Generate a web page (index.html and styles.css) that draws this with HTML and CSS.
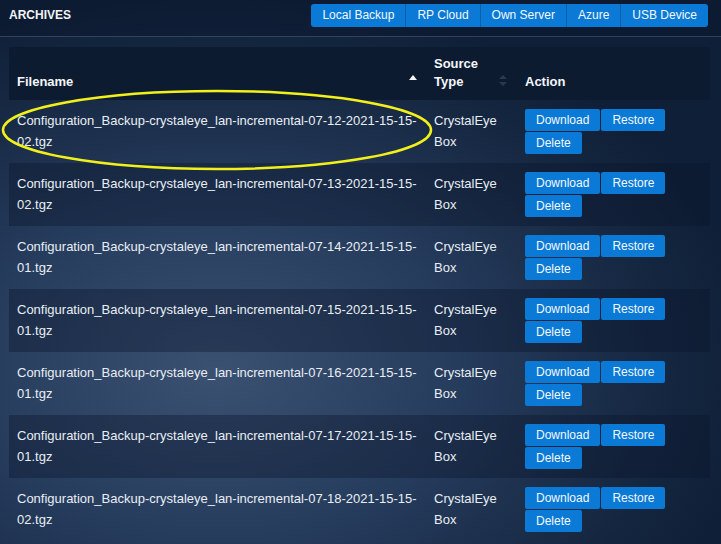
FILE: index.html
```html
<!DOCTYPE html>
<html lang="en">
<head>
  <meta charset="UTF-8" />
  <title>Archives</title>
  <link rel="stylesheet" href="styles.css">
</head>
<body>

  <div id="page">
    <div id="topbar">
      <span class="title">ARCHIVES</span>
      <div class="tabs">
        <button>Local Backup</button>
        <button>RP Cloud</button>
        <button>Own Server</button>
        <button>Azure</button>
        <button>USB Device</button>
      </div>
    </div>

    <table id="archives">
      <colgroup>
        <col class="c-file">
        <col class="c-source">
        <col class="c-action">
      </colgroup>
      <thead>
        <tr>
          <th class="sortable">Filename<span class="sort up"></span></th>
          <th class="sortable">Source Type<span class="sort both"></span></th>
          <th>Action</th>
        </tr>
      </thead>
      <tbody>
        <tr>
          <td>Configuration_Backup-crystaleye_lan-incremental-07-12-2021-15-15-02.tgz</td>
          <td>CrystalEye Box</td>
          <td class="actions"><button>Download</button><button>Restore</button><button>Delete</button></td>
        </tr>
        <tr>
          <td>Configuration_Backup-crystaleye_lan-incremental-07-13-2021-15-15-02.tgz</td>
          <td>CrystalEye Box</td>
          <td class="actions"><button>Download</button><button>Restore</button><button>Delete</button></td>
        </tr>
        <tr>
          <td>Configuration_Backup-crystaleye_lan-incremental-07-14-2021-15-15-01.tgz</td>
          <td>CrystalEye Box</td>
          <td class="actions"><button>Download</button><button>Restore</button><button>Delete</button></td>
        </tr>
        <tr>
          <td>Configuration_Backup-crystaleye_lan-incremental-07-15-2021-15-15-01.tgz</td>
          <td>CrystalEye Box</td>
          <td class="actions"><button>Download</button><button>Restore</button><button>Delete</button></td>
        </tr>
        <tr>
          <td>Configuration_Backup-crystaleye_lan-incremental-07-16-2021-15-15-01.tgz</td>
          <td>CrystalEye Box</td>
          <td class="actions"><button>Download</button><button>Restore</button><button>Delete</button></td>
        </tr>
        <tr>
          <td>Configuration_Backup-crystaleye_lan-incremental-07-17-2021-15-15-01.tgz</td>
          <td>CrystalEye Box</td>
          <td class="actions"><button>Download</button><button>Restore</button><button>Delete</button></td>
        </tr>
        <tr>
          <td>Configuration_Backup-crystaleye_lan-incremental-07-18-2021-15-15-02.tgz</td>
          <td>CrystalEye Box</td>
          <td class="actions"><button>Download</button><button>Restore</button><button>Delete</button></td>
        </tr>
      </tbody>
    </table>

    <!-- marca amarilla sobre la primera fila -->
    <svg class="highlight" width="440" height="86" viewBox="0 0 440 86">
      <ellipse cx="217" cy="41" rx="214" ry="39" fill="none" stroke="#f2f01a" stroke-width="2.5"/>
    </svg>
  </div>

</body>
</html>
```

FILE: styles.css
```css
html, body {
  margin: 0;
  padding: 0;
  height: 100%;
  overflow: hidden;
}
body {
  font-family: "Liberation Sans", Arial, sans-serif;
  color: #e9eef4;
  background: radial-gradient(ellipse 75% 70% at 30% 68%, #3a5172 0%, #263c5d 45%, #162842 80%, #0f1f37 100%);
}
#page {
  position: relative;
  padding: 0 11px 0 9px;
}
#topbar {
  display: flex;
  justify-content: space-between;
  align-items: center;
  height: 36px;
  margin: 0 -11px 0 -9px;
  padding: 0 13px 0 9px;
  border-bottom: 1px solid rgba(140, 170, 205, 0.28);
  background: rgba(8, 20, 40, 0.35);
}
#topbar .title {
  font-size: 12px;
  font-weight: bold;
  color: #f2f4f7;
  margin-top: -6px;
}
.tabs {
  display: flex;
  margin-top: -6px;
}
button {
  font-family: "Liberation Sans", Arial, sans-serif;
  font-size: 12px;
  color: #f4f8fc;
  background: #0a7ad6;
  border: none;
  cursor: pointer;
}
.tabs button {
  height: 23px;
  padding: 0 11px;
  border-left: 1px solid #0a5fa6;
}
.tabs button:first-child {
  border-left: none;
  border-radius: 3px 0 0 3px;
}
.tabs button:last-child {
  border-radius: 0 3px 3px 0;
}
#archives {
  width: 701px;
  margin-top: 10px;
  border-collapse: collapse;
  table-layout: fixed;
  font-size: 13px;
}
.c-file { width: 417px; }
.c-source { width: 91px; }
.c-action { width: 193px; }
#archives thead tr {
  height: 53px;
  background: #0d1b31;
}
#archives th {
  position: relative;
  text-align: left;
  vertical-align: bottom;
  font-weight: bold;
  color: #f4f6f9;
  line-height: 18px;
  padding: 0 8px 9px;
}
.sort {
  position: absolute;
  right: 9px;
  bottom: 14px;
  width: 0;
  height: 0;
}
.sort.up {
  bottom: 20px;
  border-left: 4px solid transparent;
  border-right: 4px solid transparent;
  border-bottom: 5px solid #f4f6f9;
}
.sort.both {
  right: 10px;
  bottom: 14px;
  border-left: 4px solid transparent;
  border-right: 4px solid transparent;
  border-top: 4px solid rgba(255, 255, 255, 0.13);
}
.sort.both::before {
  content: "";
  position: absolute;
  left: -4px;
  top: -11px;
  border-left: 4px solid transparent;
  border-right: 4px solid transparent;
  border-bottom: 4px solid rgba(255, 255, 255, 0.13);
}
#archives tbody tr {
  height: 63px;
}
#archives tbody tr:nth-child(even) {
  background: rgba(10, 22, 42, 0.38);
}
#archives td {
  vertical-align: top;
  line-height: 21px;
  padding: 10px 8px 11px;
  word-wrap: break-word;
}
#archives td.actions {
  padding: 9px 8px 0;
  line-height: 0;
}
.actions button {
  height: 22px;
  padding: 0 11px;
  margin: 0 1px 1px 0;
  line-height: 22px;
  border-radius: 2px;
}
.highlight {
  position: absolute;
  left: 0;
  top: 89px;
  pointer-events: none;
}
```
